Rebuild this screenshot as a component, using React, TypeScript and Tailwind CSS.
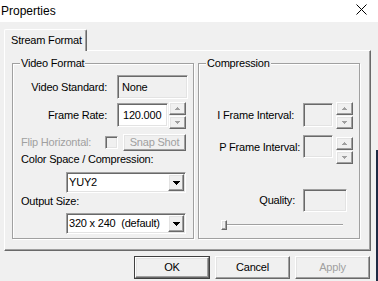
import React from 'react';

// 3D edge styles of the classic dialog controls
const raised =
  'border border-t-white border-l-white border-r-[#696969] border-b-[#696969] shadow-[inset_-1px_-1px_0_#a0a0a0,inset_1px_1px_0_#e3e3e3]';
const sunken =
  'border border-t-[#a0a0a0] border-l-[#a0a0a0] border-r-white border-b-white shadow-[inset_1px_1px_0_#696969,inset_-1px_-1px_0_#e3e3e3]';
const etched = 'border border-[#a0a0a0] shadow-[inset_1px_1px_0_#fff,1px_1px_0_#fff]';

function SpinArrow({ up }: { up: boolean }) {
  return (
    <svg width="5" height="3" viewBox="0 0 5 3" shapeRendering="crispEdges">
      {up ? (
        <>
          <rect x="2" y="0" width="1" height="1" fill="#a0a0a0" />
          <rect x="1" y="1" width="3" height="1" fill="#a0a0a0" />
          <rect x="0" y="2" width="5" height="1" fill="#a0a0a0" />
        </>
      ) : (
        <>
          <rect x="0" y="0" width="5" height="1" fill="#a0a0a0" />
          <rect x="1" y="1" width="3" height="1" fill="#a0a0a0" />
          <rect x="2" y="2" width="1" height="1" fill="#a0a0a0" />
        </>
      )}
    </svg>
  );
}

function Spin({ className = '' }: { className?: string }) {
  return (
    <div className={`flex w-[17px] shrink-0 flex-col gap-[1px] ${className}`}>
      <div className={`${raised} flex h-[13px] items-center justify-center bg-[#f0f0f0]`}>
        <SpinArrow up />
      </div>
      <div className={`${raised} flex h-[13px] items-center justify-center bg-[#f0f0f0]`}>
        <SpinArrow up={false} />
      </div>
    </div>
  );
}

function Combo({ value }: { value: string }) {
  return (
    <div className={`${sunken} ml-[53px] flex h-[21px] w-[120px] items-center bg-white`}>
      <span className="flex-1 overflow-hidden whitespace-pre pl-[2px]">{value}</span>
      <div className={`${raised} mr-[1px] flex h-[17px] w-[16px] shrink-0 items-center justify-center bg-[#f0f0f0]`}>
        <svg width="7" height="4" viewBox="0 0 7 4" shapeRendering="crispEdges">
          <rect x="0" y="0" width="7" height="1" fill="#000" />
          <rect x="1" y="1" width="5" height="1" fill="#000" />
          <rect x="2" y="2" width="3" height="1" fill="#000" />
          <rect x="3" y="3" width="1" height="1" fill="#000" />
        </svg>
      </div>
    </div>
  );
}

function Legend({ children }: { children: React.ReactNode }) {
  return <div className="-mt-[7px] ml-[7px] w-fit bg-[#f0f0f0] px-[1px] leading-[13px]">{children}</div>;
}

function VideoFormat() {
  return (
    <div className={`${etched} flex h-[176px] w-[182px] shrink-0 flex-col`}>
      <Legend>Video Format</Legend>

      <div className="mt-[5px] flex h-[24px] items-center">
        <span className="w-[94px] text-right">Video Standard:</span>
        <div className={`${sunken} ml-[10px] flex h-[24px] w-[71px] items-center pl-[4px]`}>None</div>
      </div>

      <div className="mt-[4px] flex h-[24px] items-start">
        <span className="w-[94px] self-center text-right">Frame Rate:</span>
        <div className={`${sunken} ml-[10px] flex h-[24px] w-[51px] items-center bg-white pl-[5px]`}>120.000</div>
        <Spin className="-mt-[1px] ml-[1px]" />
      </div>

      <div className="mt-[7px] flex h-[17px] items-center">
        <span className="ml-[8px] w-[84px] text-[#a0a0a0]">Flip Horizontal:</span>
        <div className={`${sunken} h-[13px] w-[13px] bg-[#f0f0f0]`} />
        <div className={`${raised} ml-[5px] flex h-[17px] w-[63px] items-center justify-center text-[#a0a0a0]`}>
          Snap Shot
        </div>
      </div>

      <span className="ml-[8px] mt-[2px] leading-[13px]">Color Space / Compression:</span>
      <div className="mt-[6px]">
        <Combo value="YUY2" />
      </div>

      <span className="ml-[8px] mt-[2px] leading-[13px]">Output Size:</span>
      <div className="mt-[5px]">
        <Combo value="320 x 240  (default)" />
      </div>
    </div>
  );
}

function CompressionGroup() {
  return (
    <div className={`${etched} ml-[4px] flex h-[176px] w-[162px] shrink-0 flex-col`}>
      <Legend>Compression</Legend>

      <div className="mt-[33px] flex h-[24px] items-start">
        <span className="w-[95px] self-center text-right">I Frame Interval:</span>
        <div className={`${sunken} ml-[9px] h-[24px] w-[30px] bg-[#f0f0f0]`} />
        <Spin className="-mt-[1px] ml-[3px]" />
      </div>

      <div className="mt-[8px] flex h-[24px] items-start">
        <span className="w-[101px] self-center text-right">P Frame Interval:</span>
        <div className={`${sunken} ml-[3px] h-[23px] w-[30px] bg-[#f0f0f0]`} />
        <Spin className="ml-[3px] mt-[2px]" />
      </div>

      <div className="mt-[30px] flex h-[23px] items-center">
        <span className="w-[96px] text-right">Quality:</span>
        <div className={`${sunken} ml-[8px] h-[23px] w-[44px] bg-[#f0f0f0]`} />
      </div>

      <div className="mt-[8px] flex h-[10px] items-center">
        <div className={`${raised} ml-[22px] h-[10px] w-[6px] bg-[#f0f0f0]`} />
        <div className="h-[2px] w-[116px] border-t border-t-[#a0a0a0] border-b border-b-white" />
      </div>
    </div>
  );
}

function Button({
  label,
  width,
  isDefault = false,
  disabled = false,
  className = '',
}: {
  label: string;
  width: string;
  isDefault?: boolean;
  disabled?: boolean;
  className?: string;
}) {
  return (
    <div className={`h-[23px] ${width} ${isDefault ? 'border border-[#404040]' : ''} ${className}`}>
      <div
        className={`${raised} flex h-full w-full items-center justify-center bg-[#f0f0f0] ${
          disabled ? 'text-[#a0a0a0]' : 'text-black'
        }`}
      >
        {label}
      </div>
    </div>
  );
}

export default function App() {
  return (
    <div className="flex h-[281px] w-[378px] flex-col overflow-hidden bg-[#f0f0f0] font-['Liberation_Sans',Arial,sans-serif] text-[11px] tracking-[-0.2px] text-black">
      {/* title bar */}
      <div className="flex h-[22px] shrink-0 items-center justify-between bg-white pl-[1px] pr-[11px]">
        <span className="text-[12px] tracking-normal">Properties</span>
        <svg width="11" height="11" viewBox="0 0 11 11" className="-mt-[4px]">
          <path d="M0.5 0.5L10.5 10.5M10.5 0.5L0.5 10.5" stroke="#000" strokeWidth="1" />
        </svg>
      </div>

      <div className="flex flex-1">
        <div className="flex w-[376px] flex-col">
          {/* tabs */}
          <div className="ml-[4px] mt-[7px] flex w-[367px] flex-col">
            <div className="relative z-10 -mb-[1px] flex h-[22px] w-[83px] items-center rounded-t-[2px] border border-b-0 border-t-white border-l-white border-r-[#696969] bg-[#f0f0f0] pl-[6px] shadow-[inset_-1px_0_0_#a0a0a0]">
              Stream Format
            </div>
            <div className="flex h-[201px] border border-t-white border-l-white border-r-[#696969] border-b-[#696969] pl-[7px] pt-[12px] shadow-[inset_-1px_-1px_0_#a0a0a0]">
              <VideoFormat />
              <CompressionGroup />
            </div>
          </div>

          {/* dialog buttons */}
          <div className="ml-[134px] mt-[5px] flex">
            <Button label="OK" width="w-[76px]" isDefault />
            <Button label="Cancel" width="w-[75px]" className="ml-[5px]" />
            <Button label="Apply" width="w-[75px]" className="ml-[5px]" disabled />
          </div>
        </div>

        {/* edge of the window behind */}
        <div className="flex w-[2px] flex-col">
          <div className="h-[128px]" />
          <div className="flex-1 bg-[#1f2a44]" />
        </div>
      </div>
    </div>
  );
}
